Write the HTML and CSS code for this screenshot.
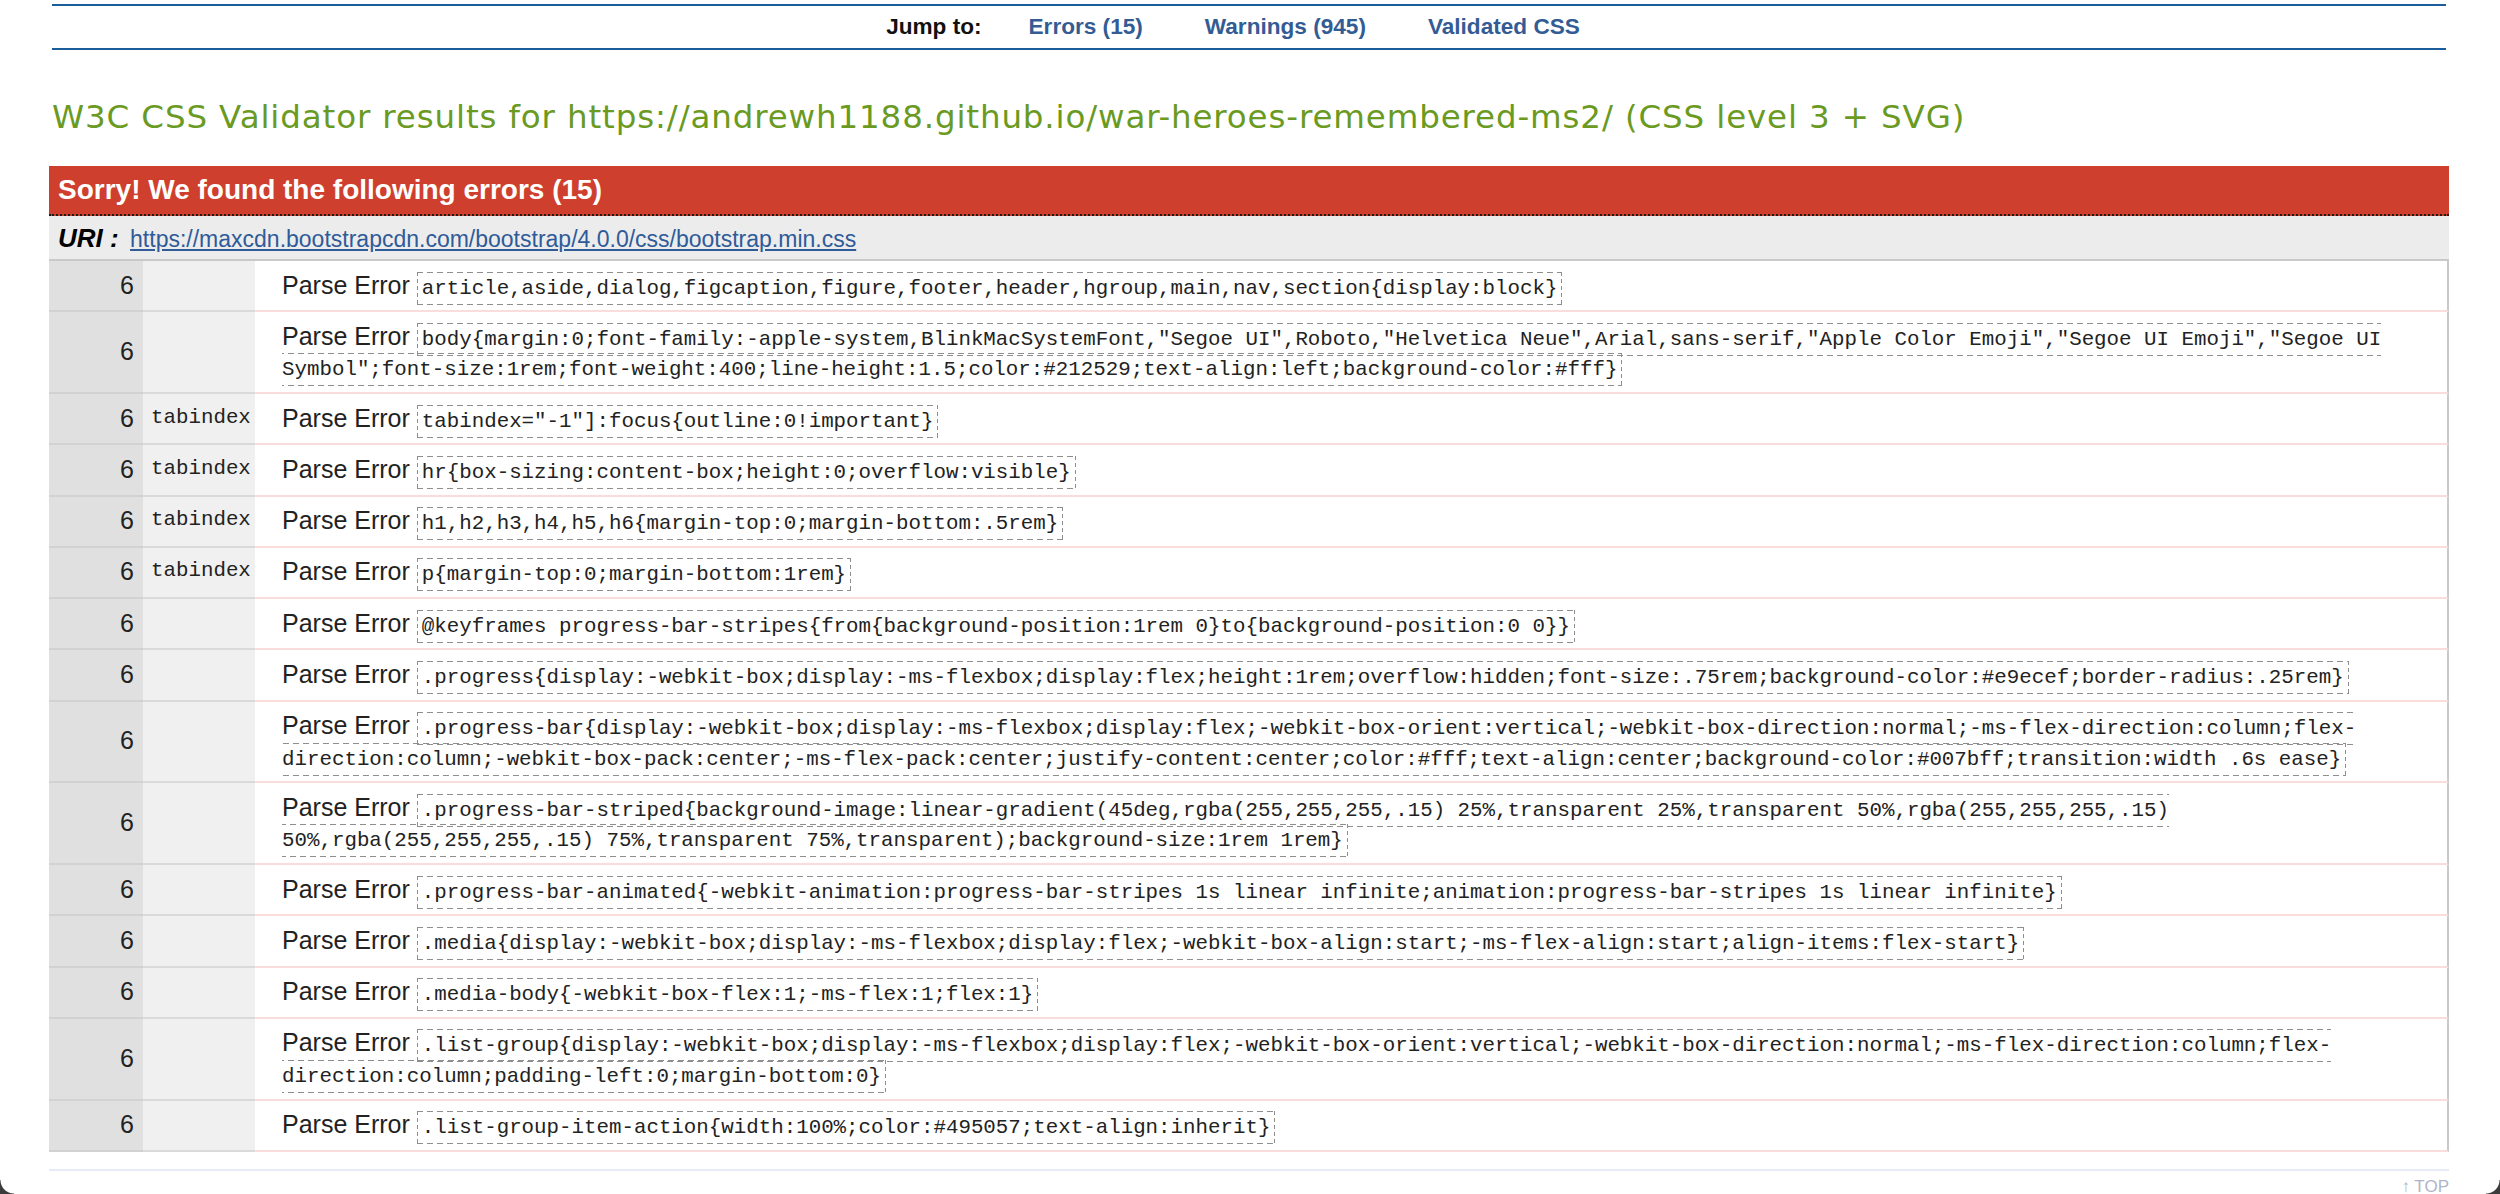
FILE: index.html
```html
<!DOCTYPE html>
<html lang="en">
<head>
<meta charset="utf-8">
<title>W3C CSS Validator results</title>
<link rel="stylesheet" href="styles.css">
</head>
<body>
<div class="page">
  <nav class="jumpbar">
    <span class="jump-label">Jump to:</span>
    <a href="#errors">Errors (15)</a>
    <a href="#warnings">Warnings (945)</a>
    <a href="#css">Validated CSS</a>
  </nav>

  <h2 class="title">W3C CSS Validator results for https://andrewh1188.github.io/war-heroes-remembered-ms2/ (CSS level 3 + SVG)</h2>

  <div class="errors" id="errors">
    <h3 class="errors-head">Sorry! We found the following errors (15)</h3>
    <div class="uri"><span class="uri-label">URI :</span> <a href="#">https://maxcdn.bootstrapcdn.com/bootstrap/4.0.0/css/bootstrap.min.css</a></div>
    <table class="error-table">
      <colgroup><col class="col-line"><col class="col-ctx"><col></colgroup>
      <tbody>
        <tr><td class="linenumber">6</td><td class="context"></td><td class="parse-error">Parse Error <span class="skipped">article,aside,dialog,figcaption,figure,footer,header,hgroup,main,nav,section{display:block}</span></td></tr>
        <tr><td class="linenumber">6</td><td class="context"></td><td class="parse-error">Parse Error <span class="skipped">body{margin:0;font-family:-apple-system,BlinkMacSystemFont,"Segoe UI",Roboto,"Helvetica Neue",Arial,sans-serif,"Apple Color Emoji","Segoe UI Emoji","Segoe UI Symbol";font-size:1rem;font-weight:400;line-height:1.5;color:#212529;text-align:left;background-color:#fff}</span></td></tr>
        <tr><td class="linenumber">6</td><td class="context">tabindex</td><td class="parse-error">Parse Error <span class="skipped">tabindex="-1"]:focus{outline:0!important}</span></td></tr>
        <tr><td class="linenumber">6</td><td class="context">tabindex</td><td class="parse-error">Parse Error <span class="skipped">hr{box-sizing:content-box;height:0;overflow:visible}</span></td></tr>
        <tr><td class="linenumber">6</td><td class="context">tabindex</td><td class="parse-error">Parse Error <span class="skipped">h1,h2,h3,h4,h5,h6{margin-top:0;margin-bottom:.5rem}</span></td></tr>
        <tr><td class="linenumber">6</td><td class="context">tabindex</td><td class="parse-error">Parse Error <span class="skipped">p{margin-top:0;margin-bottom:1rem}</span></td></tr>
        <tr><td class="linenumber">6</td><td class="context"></td><td class="parse-error">Parse Error <span class="skipped">@keyframes progress-bar-stripes{from{background-position:1rem 0}to{background-position:0 0}}</span></td></tr>
        <tr><td class="linenumber">6</td><td class="context"></td><td class="parse-error">Parse Error <span class="skipped">.progress{display:-webkit-box;display:-ms-flexbox;display:flex;height:1rem;overflow:hidden;font-size:.75rem;background-color:#e9ecef;border-radius:.25rem}</span></td></tr>
        <tr><td class="linenumber">6</td><td class="context"></td><td class="parse-error">Parse Error <span class="skipped">.progress-bar{display:-webkit-box;display:-ms-flexbox;display:flex;-webkit-box-orient:vertical;-webkit-box-direction:normal;-ms-flex-direction:column;flex-direction:column;-webkit-box-pack:center;-ms-flex-pack:center;justify-content:center;color:#fff;text-align:center;background-color:#007bff;transition:width .6s ease}</span></td></tr>
        <tr><td class="linenumber">6</td><td class="context"></td><td class="parse-error">Parse Error <span class="skipped">.progress-bar-striped{background-image:linear-gradient(45deg,rgba(255,255,255,.15) 25%,transparent 25%,transparent 50%,rgba(255,255,255,.15) 50%,rgba(255,255,255,.15) 75%,transparent 75%,transparent);background-size:1rem 1rem}</span></td></tr>
        <tr><td class="linenumber">6</td><td class="context"></td><td class="parse-error">Parse Error <span class="skipped">.progress-bar-animated{-webkit-animation:progress-bar-stripes 1s linear infinite;animation:progress-bar-stripes 1s linear infinite}</span></td></tr>
        <tr><td class="linenumber">6</td><td class="context"></td><td class="parse-error">Parse Error <span class="skipped">.media{display:-webkit-box;display:-ms-flexbox;display:flex;-webkit-box-align:start;-ms-flex-align:start;align-items:flex-start}</span></td></tr>
        <tr><td class="linenumber">6</td><td class="context"></td><td class="parse-error">Parse Error <span class="skipped">.media-body{-webkit-box-flex:1;-ms-flex:1;flex:1}</span></td></tr>
        <tr><td class="linenumber">6</td><td class="context"></td><td class="parse-error">Parse Error <span class="skipped">.list-group{display:-webkit-box;display:-ms-flexbox;display:flex;-webkit-box-orient:vertical;-webkit-box-direction:normal;-ms-flex-direction:column;flex-direction:column;padding-left:0;margin-bottom:0}</span></td></tr>
        <tr><td class="linenumber">6</td><td class="context"></td><td class="parse-error">Parse Error <span class="skipped">.list-group-item-action{width:100%;color:#495057;text-align:inherit}</span></td></tr>
      </tbody>
    </table>
  </div>

  <div class="footer-line"></div>
  <div class="top-link"><a href="#">↑ TOP</a></div>
</div>
<div class="corner corner-left"></div>
<div class="corner corner-right"></div>
</body>
</html>
```
FILE: styles.css
```css
* { box-sizing: border-box; }

html, body {
  margin: 0;
  padding: 0;
  background: #fff;
}

body {
  font-family: "Liberation Sans", Arial, Helvetica, sans-serif;
  color: #222;
}

.page {
  width: 2400px;
  margin-left: 49px;
}

/* jump bar */
.jumpbar {
  margin: 4px 3px 0;
  height: 46px;
  border-top: 2px solid #1b5c9a;
  border-bottom: 2px solid #1b5c9a;
  display: flex;
  justify-content: center;
  align-items: center;
  padding-right: 32px;
  font-size: 22.6px;
  font-weight: bold;
}

.jump-label {
  color: #111;
  margin-right: 47px;
}

.jumpbar a {
  color: #335c95;
  text-decoration: none;
}

.jumpbar a + a {
  margin-left: 62px;
}

/* title */
.title {
  margin: 47px 0 29px;
  padding-left: 3px;
  font-family: "DejaVu Sans", Verdana, sans-serif;
  font-weight: normal;
  font-size: 32.5px;
  letter-spacing: 0.87px;
  line-height: 40px;
  color: #6a9a1f;
  white-space: nowrap;
}

/* error block */
.errors-head {
  margin: 0;
  height: 50px;
  padding-left: 9px;
  line-height: 48px;
  background: #cf3f2e;
  color: #fff;
  font-size: 28px;
  font-weight: bold;
  border-bottom: 2px dotted #1a1a1a;
}

.uri {
  height: 45px;
  padding: 2px 0 0 9px;
  line-height: 41px;
  background: #ececec;
  border-bottom: 2px solid #c9c9c9;
  font-size: 23px;
}

.uri-label {
  font-weight: bold;
  font-style: italic;
  font-size: 26px;
  color: #000;
  margin-right: 5px;
}

.uri a {
  color: #2f5b99;
  text-decoration: underline;
}

.error-table {
  width: 100%;
  border-collapse: separate;
  border-spacing: 0;
  table-layout: fixed;
}

.col-line { width: 94px; }
.col-ctx { width: 112px; }

.error-table td {
  padding: 8.5px 0 10.25px;
  line-height: 30.5px;
  vertical-align: middle;
}

.error-table td.linenumber {
  background: #e0e0e0;
  border-bottom: 2px solid #d2d2d2;
  text-align: right;
  padding-right: 9px;
  font-size: 25px;
  color: #222;
}

.error-table td.context {
  background: #f0f0f0;
  border-bottom: 2px solid #dadada;
  padding-left: 8px;
  font-family: "Liberation Mono", "Courier New", monospace;
  font-size: 20.8px;
  color: #222;
}

.error-table td.parse-error {
  border-bottom: 2px solid #fbdcdc;
  border-right: 2px solid #c9c9c9;
  padding-left: 27px;
  padding-right: 20px;
  font-size: 25px;
  color: #222;
}

/* dashed box drawn with long dashes, like the reference */
.skipped {
  font-family: "Liberation Mono", "Courier New", monospace;
  font-size: 20.8px;
  line-height: 1;
  border: 1px solid transparent;
  padding: 4px;
  color: #222;
  background-image:
    repeating-linear-gradient(90deg, #8e8e8e 0 6px, transparent 6px 10px),
    repeating-linear-gradient(90deg, #8e8e8e 0 6px, transparent 6px 10px),
    repeating-linear-gradient(180deg, #8e8e8e 0 4px, transparent 4px 7px),
    repeating-linear-gradient(180deg, #8e8e8e 0 4px, transparent 4px 7px);
  background-size: 100% 1px, 100% 1px, 1px 100%, 1px 100%;
  background-position: 0 0, 0 100%, 0 0, 100% 0;
  background-repeat: no-repeat;
  background-origin: border-box;
  background-clip: border-box;
}

/* footer */
.footer-line {
  margin-top: 17px;
  border-top: 2px solid #e6ebf8;
}

.top-link {
  text-align: right;
  margin-top: 5px;
  font-size: 17px;
  line-height: 22px;
}

.top-link a {
  color: #b0b4c8;
  text-decoration: none;
}

/* screen corners */
.corner {
  position: fixed;
  bottom: 0;
  width: 14px;
  height: 14px;
}

.corner-left {
  left: 0;
  background: radial-gradient(circle at 100% 0, transparent 13px, #3c3c3c 14px);
}

.corner-right {
  right: 0;
  background: radial-gradient(circle at 0 0, transparent 13px, #3c3c3c 14px);
}
```
